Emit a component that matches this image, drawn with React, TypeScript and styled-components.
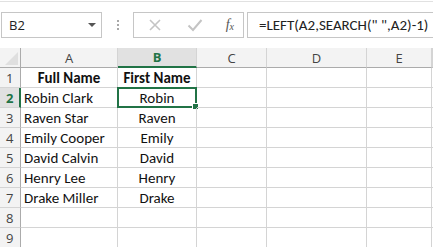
import { createGlobalStyle, styled } from 'styled-components';

const GREEN = '#217346';

const GlobalStyle = createGlobalStyle`
  html, body { margin: 0; padding: 0; background: #fff; }
  body { width: 433px; height: 247px; overflow: hidden; font-family: Carlito, Lato, 'Liberation Sans', sans-serif; }
`;

const columns = [
  { key: 'A', width: 97 },
  { key: 'B', width: 79 },
  { key: 'C', width: 70 },
  { key: 'D', width: 100 },
  { key: 'E', width: 65 },
  { key: 'F', width: 1 },
];

const rows: [string, string][] = [
  ['Full Name', 'First Name'],
  ['Robin Clark', 'Robin'],
  ['Raven Star', 'Raven'],
  ['Emily Cooper', 'Emily'],
  ['David Calvin', 'David'],
  ['Henry Lee', 'Henry'],
  ['Drake Miller', 'Drake'],
  ['', ''],
  ['', ''],
];

export default function App() {
  const template = `21px ${columns.map((c) => c.width + 'px').join(' ')}`;
  return (
    <>
      <GlobalStyle />
      <Toolbar>
        <NameBox>
          <span>B2</span>
          <Caret />
        </NameBox>
        <Grip>
          <i />
          <i />
          <i />
        </Grip>
        <ButtonBox>
          <IconButton>
            <svg width='14' height='14' viewBox='0 0 14 14'>
              <path d='M2 2 L12 12 M12 2 L2 12' stroke='#c4c4c4' strokeWidth='1.6' fill='none' />
            </svg>
          </IconButton>
          <IconButton>
            <svg width='16' height='14' viewBox='0 0 16 14'>
              <path d='M1.5 7.5 L6 12 L14.5 2' stroke='#c4c4c4' strokeWidth='2' fill='none' />
            </svg>
          </IconButton>
          <FxLabel>
            f<sub>x</sub>
          </FxLabel>
        </ButtonBox>
        <FormulaInput>=LEFT(A2,SEARCH(" ",A2)-1)</FormulaInput>
      </Toolbar>
      <Sheet style={{ gridTemplateColumns: template }}>
        <Corner>
          <CornerTriangle />
        </Corner>
        {columns.map((c) => (
          <ColHeader key={c.key} $active={c.key === 'B'}>
            {c.key !== 'F' ? c.key : ''}
          </ColHeader>
        ))}
        {rows.map((r, i) => (
          <Row key={i} num={i + 1} data={r} />
        ))}
      </Sheet>
    </>
  );
}

function Row({ num, data }: { num: number; data: [string, string] }) {
  const header = num === 1;
  return (
    <>
      <RowHeader $active={num === 2}>{num}</RowHeader>
      <Cell $bold={header} $align={header ? 'center' : 'left'}>
        {data[0]}
      </Cell>
      <Cell $bold={header} $align='center'>
        {data[1]}
        {num === 2 && (
          <Selection>
            <Handle />
          </Selection>
        )}
      </Cell>
      <Cell />
      <Cell />
      <Cell />
      <Cell />
    </>
  );
}

const Toolbar = styled.div`
  margin-top: 1px;
  border-top: 1px solid #e1e1e1;
  height: 45px;
  box-sizing: border-box;
  padding-top: 10px;
  display: flex;
  align-items: flex-start;
  overflow: hidden;
  font-family: 'Segoe UI', 'Open Sans', 'Liberation Sans', sans-serif;
`;

const NameBox = styled.div`
  margin-left: 1px;
  width: 101px;
  height: 26px;
  box-sizing: border-box;
  border: 1px solid #c6c6c6;
  display: flex;
  align-items: center;
  justify-content: space-between;
  padding: 0 5px 0 7px;
  font-size: 13px;
  color: #222;
`;

const Caret = styled.div`
  width: 0;
  height: 0;
  border-left: 4px solid transparent;
  border-right: 4px solid transparent;
  border-top: 4px solid #555;
`;

const Grip = styled.div`
  width: 31px;
  height: 26px;
  display: flex;
  flex-direction: column;
  align-items: center;
  justify-content: center;
  gap: 2px;
  i {
    width: 2px;
    height: 2px;
    background: #a8a8a8;
  }
`;

const ButtonBox = styled.div`
  width: 111px;
  height: 26px;
  box-sizing: border-box;
  border: 1px solid #c6c6c6;
  display: flex;
  align-items: center;
  padding: 0 9px 0 12px;
  justify-content: space-between;
`;

const IconButton = styled.div`
  width: 18px;
  display: flex;
  justify-content: center;
`;

const FxLabel = styled.div`
  font-family: 'Liberation Serif', serif;
  font-style: italic;
  font-size: 14px;
  color: #555;
  sub {
    font-size: 10px;
    vertical-align: -1px;
  }
`;

const FormulaInput = styled.div`
  margin-left: 3px;
  flex: 1;
  height: 26px;
  box-sizing: border-box;
  border: 1px solid #c6c6c6;
  border-right: none;
  display: flex;
  align-items: center;
  padding-left: 11px;
  font-size: 15px;
  color: #222;
  white-space: nowrap;
  font-family: Carlito, Lato, 'Liberation Sans', sans-serif;
`;

const Sheet = styled.div`
  margin-top: 2px;
  display: grid;
  grid-auto-rows: 20px;
  overflow: hidden;
`;

const headerBase = `
  box-sizing: border-box;
  background: #f3f3f3;
  display: flex;
  align-items: center;
  justify-content: center;
  font-size: 13px;
  color: #444;
  font-family: 'Segoe UI', 'Open Sans', 'Liberation Sans', sans-serif;
`;

const Corner = styled.div`
  ${headerBase}
  position: relative;
  border-right: 1px solid #ababab;
  border-bottom: 1px solid #ababab;
`;

const CornerTriangle = styled.div`
  position: absolute;
  right: 2px;
  bottom: 2px;
  width: 0;
  height: 0;
  border-left: 13px solid transparent;
  border-bottom: 13px solid #dfdfdf;
`;

const ColHeader = styled.div<{ $active?: boolean }>`
  ${headerBase}
  border-right: 1px solid #d4d4d4;
  border-bottom: ${(p) => (p.$active ? `2px solid ${GREEN}` : '1px solid #ababab')};
  background: ${(p) => (p.$active ? '#e1e1e1' : '#f3f3f3')};
  color: ${(p) => (p.$active ? GREEN : '#444')};
  font-weight: ${(p) => (p.$active ? 700 : 400)};
`;

const RowHeader = styled.div<{ $active?: boolean }>`
  ${headerBase}
  justify-content: flex-start;
  padding-left: 6px;
  border-bottom: 1px solid #d4d4d4;
  border-right: ${(p) => (p.$active ? `2px solid ${GREEN}` : '1px solid #ababab')};
  background: ${(p) => (p.$active ? '#e1e1e1' : '#f3f3f3')};
  color: ${(p) => (p.$active ? GREEN : '#444')};
  font-weight: ${(p) => (p.$active ? 700 : 400)};
`;

const Cell = styled.div<{ $bold?: boolean; $align?: 'left' | 'center' }>`
  position: relative;
  box-sizing: border-box;
  border-right: 1px solid #d4d4d4;
  border-bottom: 1px solid #d4d4d4;
  display: flex;
  align-items: center;
  justify-content: ${(p) => (p.$align === 'center' ? 'center' : 'flex-start')};
  padding: 0 3px;
  font-size: 15px;
  color: #111;
  font-weight: ${(p) => (p.$bold ? 700 : 400)};
  white-space: nowrap;
`;

const Selection = styled.div`
  position: absolute;
  left: -1px;
  top: -1px;
  right: -1px;
  bottom: -1px;
  border: 2px solid ${GREEN};
`;

const Handle = styled.div`
  position: absolute;
  right: -4px;
  bottom: -4px;
  width: 5px;
  height: 5px;
  background: ${GREEN};
  border: 1px solid #fff;
`;
